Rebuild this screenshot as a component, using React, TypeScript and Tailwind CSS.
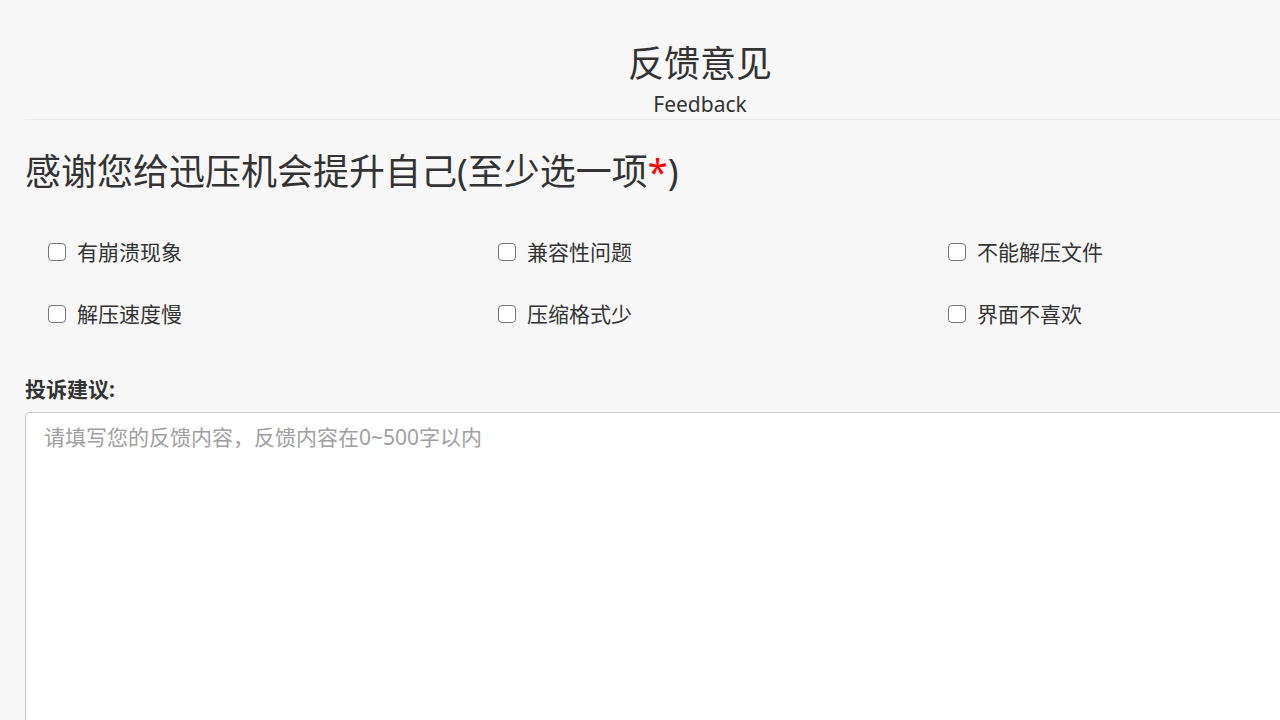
import React from "react";

const font = { fontFamily: '"Noto Sans", "Noto Sans CJK SC", sans-serif' };

const options = [
  "有崩溃现象",
  "兼容性问题",
  "不能解压文件",
  "解压速度慢",
  "压缩格式少",
  "界面不喜欢",
];

export default function App() {
  return (
    <div className="w-[1400px] min-h-[720px] bg-[#f7f7f7] text-[#333]" style={font}>
      <div className="ml-[25px] w-[1350px]">
        <div className="border-b border-[#ebebeb] pb-[3px] pt-[42px] text-center">
          <div className="text-[36px] leading-[43px]">反馈意见</div>
          <div className="mt-[7px] text-[21px] leading-[24px]">Feedback</div>
        </div>
        <h1 className="mt-[30px] text-[36px] leading-[43px] font-normal">
          感谢您给迅压机会提升自己(至少选一项<span className="text-[#ff0000]">*</span>)
        </h1>
        <div className="mt-[28px] grid grid-cols-3">
          {options.map((o) => (
            <label key={o} className="flex h-[62px] items-center pl-[23px]">
              <input
                type="checkbox"
                className="h-[18px] w-[18px] appearance-none rounded-[4px] border-[1.5px] border-[#767676] bg-white"
              />
              <span className="ml-[11px] text-[21px] leading-[30px]">{o}</span>
            </label>
          ))}
        </div>
        <div className="mt-[32px] text-[21px] font-bold leading-[24px]">投诉建议:</div>
        <textarea
          className="mt-[11px] block h-[400px] w-full resize-none rounded-[4px] border border-[#cccccc] bg-white pl-[18px] pt-[9px] text-[21px] leading-[30px] outline-none placeholder:text-[#a0a0a0]"
          style={font}
          placeholder="请填写您的反馈内容，反馈内容在0~500字以内"
        />
      </div>
    </div>
  );
}
